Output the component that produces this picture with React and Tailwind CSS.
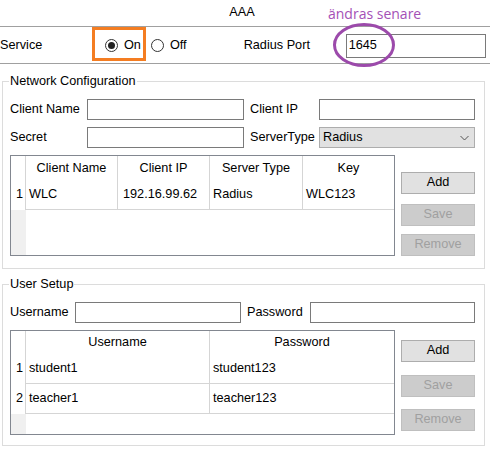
import { useState } from 'react';

const clients = [{ name: 'WLC', ip: '192.16.99.62', type: 'Radius', key: 'WLC123' }];
const users = [
  { name: 'student1', password: 'student123' },
  { name: 'teacher1', password: 'teacher123' },
];

function TextBox({ className = '', value = '' }) {
  return (
    <div className={`h-[21px] border border-[#7a7a7a] bg-white flex items-center pl-[3px] ${className}`}>
      {value}
    </div>
  );
}

function Radio({ checked }) {
  return (
    <span className="w-[13px] h-[13px] rounded-full border border-[#333] bg-white flex items-center justify-center shrink-0">
      {checked && <span className="w-[7px] h-[7px] rounded-full bg-[#222]" />}
    </span>
  );
}

function Button({ label, disabled, className = '' }) {
  return (
    <div
      className={`w-[74px] h-[22px] flex items-center justify-center border ${
        disabled ? 'bg-[#cccccc] border-[#bfbfbf] text-[#a0a0a0]' : 'bg-[#e1e1e1] border-[#adadad] text-black'
      } ${className}`}
    >
      {label}
    </div>
  );
}

function Group({ title, className = '', children }) {
  return (
    <fieldset className={`ml-[2px] w-[483px] border border-[#dcdcdc] pl-[7px] pr-[8px] ${className}`}>
      <legend className="-ml-[1px] px-[1px] leading-[17px]">{title}</legend>
      {children}
    </fieldset>
  );
}

export default function App() {
  const [service, setService] = useState('on');

  return (
    <div className="relative w-[490px] h-[449px] bg-white overflow-hidden text-black text-[12.7px] font-['Liberation_Sans',Arial,sans-serif]">
      {/* title */}
      <div className="relative h-[27px] border-b border-[#a0a0a0] flex items-center justify-center">
        <span className="mr-[6px]">AAA</span>
        <span className="absolute left-[328px] top-[3px] text-[14px] text-[#a450b6] font-['Open_Sans',sans-serif]">
          ändras senare
        </span>
      </div>

      {/* service row */}
      <div className="relative h-[37px] border-b border-[#a0a0a0] flex items-center pt-[2px]">
        <span className="w-[105px]">Service</span>
        <button className="flex items-center gap-[6px]" onClick={() => setService('on')}>
          <Radio checked={service === 'on'} />
          <span>On</span>
        </button>
        <button className="ml-[10px] flex items-center gap-[6px]" onClick={() => setService('off')}>
          <Radio checked={service === 'off'} />
          <span>Off</span>
        </button>
        <span className="ml-[57px] w-[102px]">Radius Port</span>
        <div className="h-[24px] w-[140px] border border-[#7a7a7a] flex items-center pl-[2px]">1645</div>
        <div className="absolute left-[92px] top-0 w-[54px] h-[34px] border-[3px] border-[#f47d22]" />
      </div>

      {/* network configuration */}
      <Group title="Network Configuration" className="mt-[9px] pt-[9px] pb-[12px]">
        <div className="grid grid-cols-[77px_157px_75px_156px] items-center gap-y-[7px]">
          <span>Client Name</span>
          <TextBox />
          <span className="ml-[6px]">Client IP</span>
          <TextBox />
          <span>Secret</span>
          <TextBox />
          <span className="ml-[6px]">ServerType</span>
          <div className="h-[21px] border border-[#adadad] bg-[#e1e1e1] flex items-center justify-between pl-[3px] pr-[5px]">
            <span>Radius</span>
            <svg width="9" height="6" viewBox="0 0 9 6" fill="none">
              <path d="M0.5 1 L4.5 5 L8.5 1" stroke="#555" strokeWidth="1" />
            </svg>
          </div>
        </div>

        <div className="mt-[7px] flex">
          <div className="w-[385px] h-[101px] border border-[#828790] flex flex-col">
            <div className="h-[24px] flex">
              <div className="w-[15px] border-r border-[#d5d5d5]" />
              <div className="w-[92px] border-r border-[#d5d5d5] flex items-center justify-center pt-[2px]">Client Name</div>
              <div className="w-[92px] border-r border-[#d5d5d5] flex items-center justify-center pt-[2px]">Client IP</div>
              <div className="w-[93px] border-r border-[#d5d5d5] flex items-center justify-center pt-[2px]">Server Type</div>
              <div className="flex-1 flex items-center justify-center pt-[2px]">Key</div>
            </div>
            {clients.map((c, i) => (
              <div key={i} className="h-[30px] flex">
                <div className="w-[15px] border-r border-[#d5d5d5] flex items-center justify-end pr-[2px]">{i + 1}</div>
                <div className="w-[92px] border-r border-b border-[#d5d5d5] flex items-center pl-[3px]">{c.name}</div>
                <div className="w-[92px] border-r border-b border-[#d5d5d5] flex items-center pl-[5px]">{c.ip}</div>
                <div className="w-[93px] border-r border-b border-[#d5d5d5] flex items-center pl-[3px]">{c.type}</div>
                <div className="flex-1 border-b border-[#d5d5d5] flex items-center pl-[3px]">{c.key}</div>
              </div>
            ))}
            <div className="flex-1 flex">
              <div className="w-[15px] bg-[#f0f0f0]" />
            </div>
          </div>
          <div className="ml-[6px] flex flex-col">
            <Button label="Add" className="mt-[17px]" />
            <Button label="Save" disabled className="mt-[10px]" />
            <Button label="Remove" disabled className="mt-[8px]" />
          </div>
        </div>
      </Group>

      {/* user setup */}
      <Group title="User Setup" className="mt-[7px] pt-[9px] pb-[10px]">
        <div className="grid grid-cols-[65px_166px_69px_165px] items-center">
          <span>Username</span>
          <TextBox />
          <span className="ml-[6px]">Password</span>
          <TextBox />
        </div>

        <div className="mt-[7px] flex">
          <div className="w-[385px] h-[105px] border border-[#828790] flex flex-col">
            <div className="h-[23px] flex">
              <div className="w-[15px] border-r border-[#d5d5d5]" />
              <div className="w-[184px] border-r border-[#d5d5d5] flex items-center justify-center pt-[1px]">Username</div>
              <div className="flex-1 flex items-center justify-center pt-[1px]">Password</div>
            </div>
            {users.map((u, i) => (
              <div key={i} className="h-[30px] flex">
                <div className="w-[15px] border-r border-[#d5d5d5] flex items-center justify-end pr-[2px]">{i + 1}</div>
                <div className="w-[184px] border-r border-b border-[#d5d5d5] flex items-center pl-[3px]">{u.name}</div>
                <div className="flex-1 border-b border-[#d5d5d5] flex items-center pl-[3px]">{u.password}</div>
              </div>
            ))}
            <div className="flex-1 flex">
              <div className="w-[15px] bg-[#f0f0f0]" />
            </div>
          </div>
          <div className="ml-[6px] flex flex-col">
            <Button label="Add" className="mt-[10px]" />
            <Button label="Save" disabled className="mt-[13px]" />
            <Button label="Remove" disabled className="mt-[12px]" />
          </div>
        </div>
      </Group>

      {/* annotation ring */}
      <svg className="absolute left-[330px] top-[20px]" width="70" height="50" viewBox="0 0 70 50" fill="none">
        <ellipse cx="34" cy="25" rx="29.5" ry="20.5" stroke="#9c4aab" strokeWidth="3" />
      </svg>
    </div>
  );
}
